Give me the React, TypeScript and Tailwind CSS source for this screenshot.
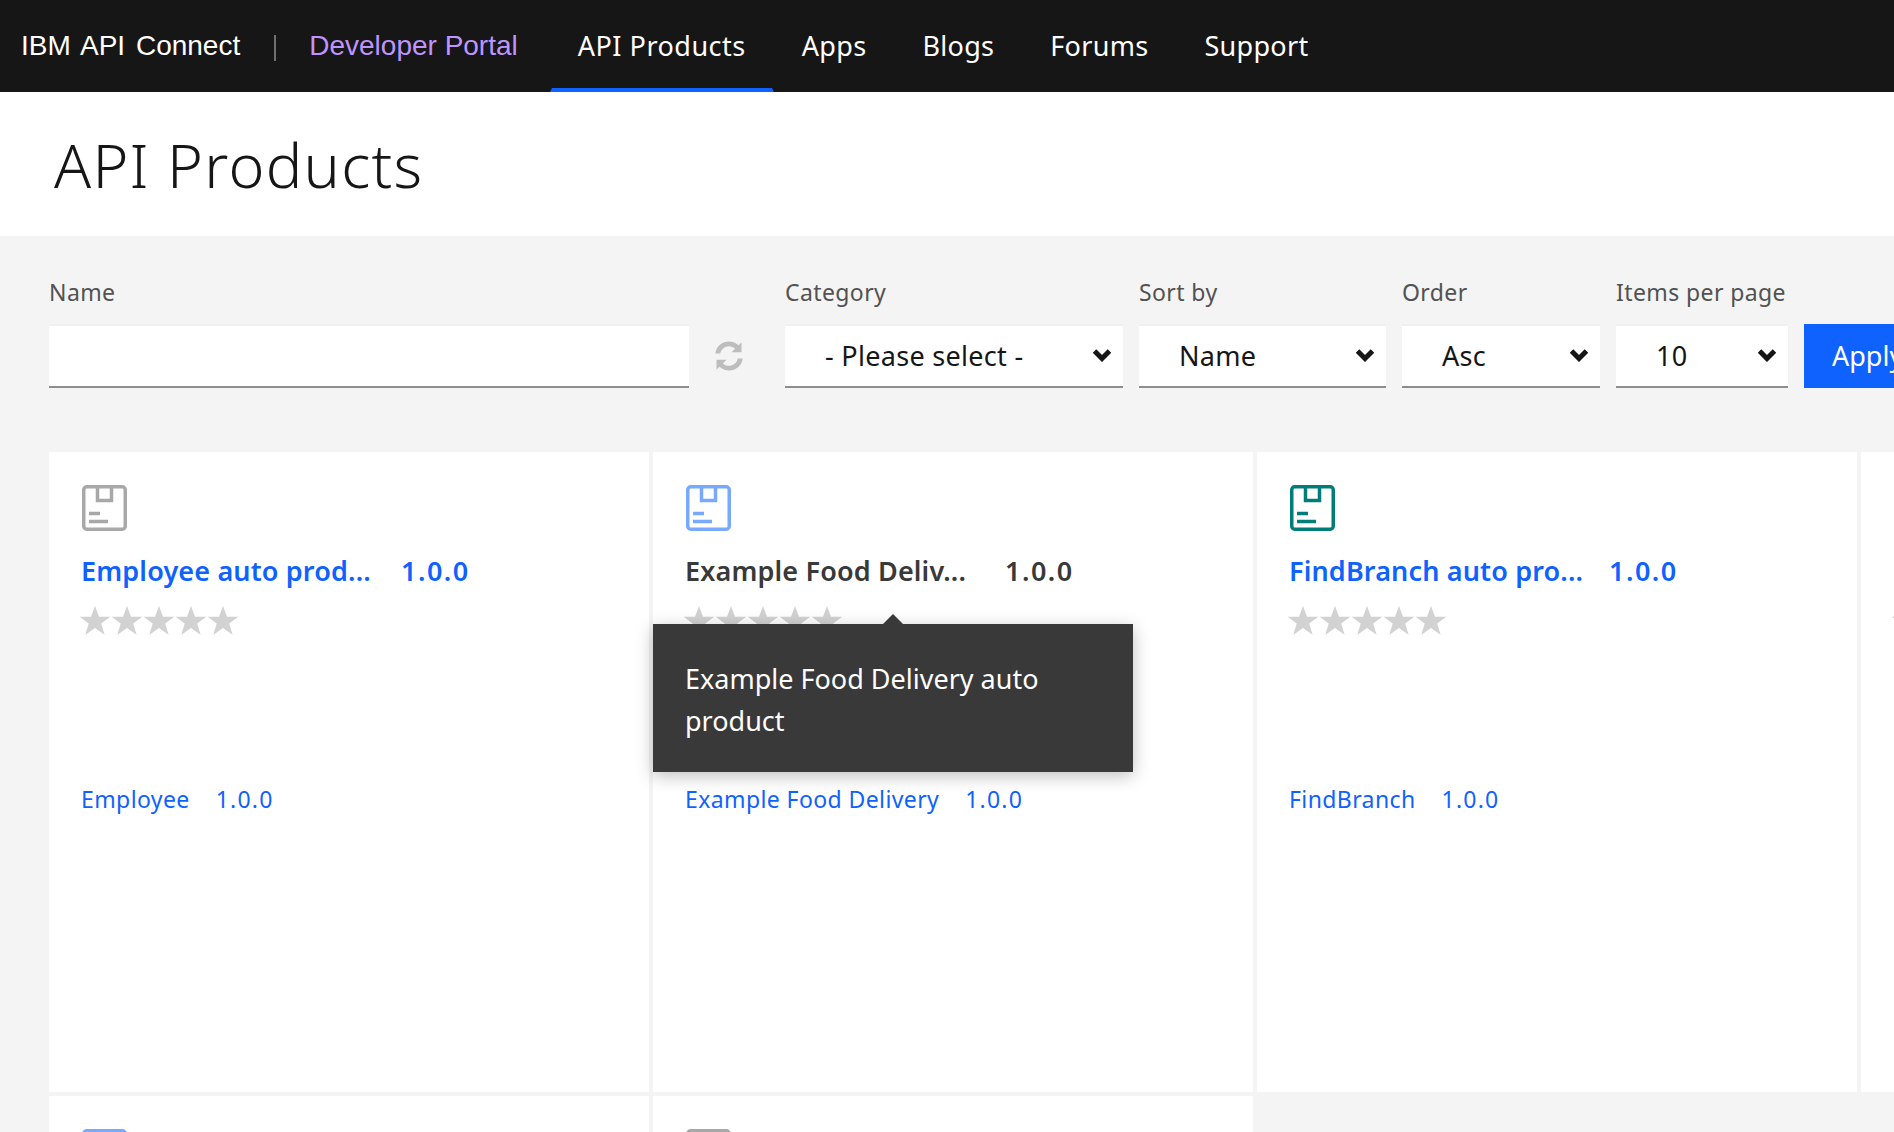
import React from 'react';

const font = 'font-["Noto_Sans",sans-serif]';

const navLinks = ['API Products', 'Apps', 'Blogs', 'Forums', 'Support'];

const products = [
    { title: 'Employee auto prod...', name: 'Employee', color: 'text-[#a8a8a8]', plain: false },
    { title: 'Example Food Deliv...', name: 'Example Food Delivery', color: 'text-[#78a9ff]', plain: true },
    { title: 'FindBranch auto pro...', name: 'FindBranch', color: 'text-[#007d79]', plain: false },
    { title: 'Greeting auto produ...', name: 'Greeting', color: 'text-[#a8a8a8]', plain: false },
    { title: 'Payment auto produ...', name: 'Payment', color: 'text-[#78a9ff]', plain: false },
    { title: 'Shipping auto produ...', name: 'Shipping', color: 'text-[#a8a8a8]', plain: false },
];

function ProductIcon({ className }: { className: string }) {
    return (
        <svg viewBox="0 0 45 46" className={`ml-[1px] w-[45px] h-[46px] ${className}`} fill="none" stroke="currentColor" strokeWidth="3.5">
            <rect x="1.75" y="1.75" width="41.5" height="42.5" rx="3" />
            <path d="M15.500 2v13.500h14V2" />
            <path d="M7 28.500h11M7 36.500h19" />
        </svg>
    );
}

function Star() {
    return (
        <svg viewBox="0 0 24 24" className="w-[32px] h-[32px] text-[#d2d2d2]" fill="currentColor">
            <path d="M12 1.500l3 8h8.500l-6.800 5.200 2.500 8.300-7.200-5-7.200 5 2.500-8.300L.5 9.500H9z" />
        </svg>
    );
}

function Chevron() {
    return (
        <svg viewBox="0 0 18 14" className="absolute right-[12px] top-[24px] w-[18px] h-[14px] text-[#161616] pointer-events-none" fill="none" stroke="currentColor" strokeWidth="5">
            <path d="M1.500 3l7.500 7.500L16.500 3" />
        </svg>
    );
}

function FilterSelect({ label, value, width }: { label: string; value: string; width: string }) {
    return (
        <div className={`flex flex-col shrink-0 ${width}`}>
            <label className="h-[36px] mb-[14px] text-[23px] leading-[36px] tracking-[0.4px] text-[#525252] whitespace-nowrap">{label}</label>
            <div className="relative">
                <select className="appearance-none w-full h-[64px] pl-[40px] pt-[2px] bg-white border-b-2 border-[#8d8d8d] shadow-[inset_0_2px_0_#f0f0f0] text-[27px] tracking-[0.3px] text-[#161616] outline-none">
                    <option>{value}</option>
                </select>
                <Chevron />
            </div>
        </div>
    );
}

function ProductCard({ product }: { product: typeof products[number] }) {
    const titleColor = product.plain ? 'text-[#393939]' : 'text-[#0f62fe]';
    return (
        <div className="bg-white h-[640px] pt-[33px] px-[32px]">
            <ProductIcon className={product.color} />
            <div className={`flex h-[36px] mt-[22px] text-[27px] leading-[36px] font-semibold tracking-[0.15px] whitespace-nowrap ${titleColor}`}>
                <span className="w-[320px]">{product.title}</span>
                <span className="tracking-[1.500px]">1.0.0</span>
            </div>
            <div className="flex mt-[15px] -ml-[2px]">
                <Star /><Star /><Star /><Star /><Star />
            </div>
            <div className="flex gap-[26px] mt-[147px] text-[23px] leading-[32px] tracking-[0.4px] text-[#0f62fe] whitespace-nowrap">
                <span>{product.name}</span>
                <span className="tracking-[1.200px]">1.0.0</span>
            </div>
        </div>
    );
}

export default function App() {
    return (
        <div className={`relative h-screen overflow-hidden bg-[#f4f4f4] ${font}`}>
            {/* Top navigation */}
            <header className="flex items-center h-[92px] bg-[#161616] whitespace-nowrap">
                <span className='ml-[21px] font-["Liberation_Sans",sans-serif] text-[28px] [word-spacing:3px] text-white'>IBM API Connect</span>
                <span className="ml-[34px] w-[2px] h-[26px] mt-[4px] bg-[#6f6f6f]"></span>
                <span className='ml-[33px] font-["Liberation_Sans",sans-serif] text-[28px] text-[#be95ff]'>Developer Portal</span>
                <nav className="flex ml-[32px] h-full">
                    {navLinks.map((link, i) => (
                        <a key={link} className={`flex items-center px-[26px] h-full text-[27px] text-white border-x-2 border-x-transparent border-b-4 pt-[4px] ${i === 0 ? 'tracking-[0.5px] border-b-[#0f62fe]' : 'tracking-[0.3px] border-b-transparent'}`}>
                            {link}
                        </a>
                    ))}
                </nav>
            </header>

            <div className="flex items-center h-[144px] pl-[54px] pt-[2px] bg-white">
                <h1 className="text-[61px] tracking-[1.300px] font-light text-[#161616]">API Products</h1>
            </div>

            {/* Filters */}
            <div className="flex items-end gap-[16px] pl-[49px] pt-[38px] w-[2100px]">
                <div className="flex flex-col w-[640px] shrink-0">
                    <label className="h-[36px] mb-[14px] text-[23px] leading-[36px] tracking-[0.4px] text-[#525252]">Name</label>
                    <input className="h-[64px] bg-white border-b-2 border-[#8d8d8d] shadow-[inset_0_2px_0_#f0f0f0] outline-none" />
                </div>
                <div className="flex items-center w-[64px] h-[64px] pl-[8px] shrink-0 text-[#bdbdbd]">
                    <svg viewBox="0 0 32 32" className="w-[32px] h-[34px]" fill="currentColor">
                        <path d="M16 1.500c3.700 0 7 1.400 9.500 3.700l3-3v10h-10l3.600-3.600c-1.600-1.500-3.800-2.400-6.100-2.400-4.400 0-8 3.100-8.800 7.300H2.300C3.200 6.300 9 1.500 16 1.500z" />
                        <path d="M16 30.500c-3.700 0-7-1.400-9.500-3.700l-3 3v-10h10l-3.600 3.600c1.600 1.500 3.800 2.400 6.100 2.400 4.400 0 8-3.100 8.800-7.300h4.900C28.800 25.700 23 30.500 16 30.500z" />
                    </svg>
                </div>
                <FilterSelect label="Category" value="- Please select -" width="w-[338px]" />
                <FilterSelect label="Sort by" value="Name" width="w-[247px]" />
                <FilterSelect label="Order" value="Asc" width="w-[198px]" />
                <FilterSelect label="Items per page" value="10" width="w-[172px]" />
                <button className="h-[64px] w-[120px] shrink-0 pl-[28px] text-left bg-[#0f62fe] text-white text-[27px]">Apply</button>
            </div>

            {/* Product cards */}
            <div className="grid grid-cols-[repeat(4,600px)] gap-[4px] pl-[49px] pt-[64px] w-[2500px]">
                {products.map((product) => (
                    <ProductCard key={product.name} product={product} />
                ))}
            </div>

            {/* Tooltip over the second card */}
            <div className="absolute left-[653px] top-[624px] w-[480px] h-[148px] px-[32px] py-[34px] bg-[#393939] text-white text-[27px] leading-[42px] shadow-[0_4px_16px_rgba(0,0,0,0.25)]">
                <span className="absolute left-[230px] -top-[10px] w-0 h-0 border-x-[10px] border-x-transparent border-b-[10px] border-b-[#393939]"></span>
                Example Food Delivery auto product
            </div>
        </div>
    );
}
